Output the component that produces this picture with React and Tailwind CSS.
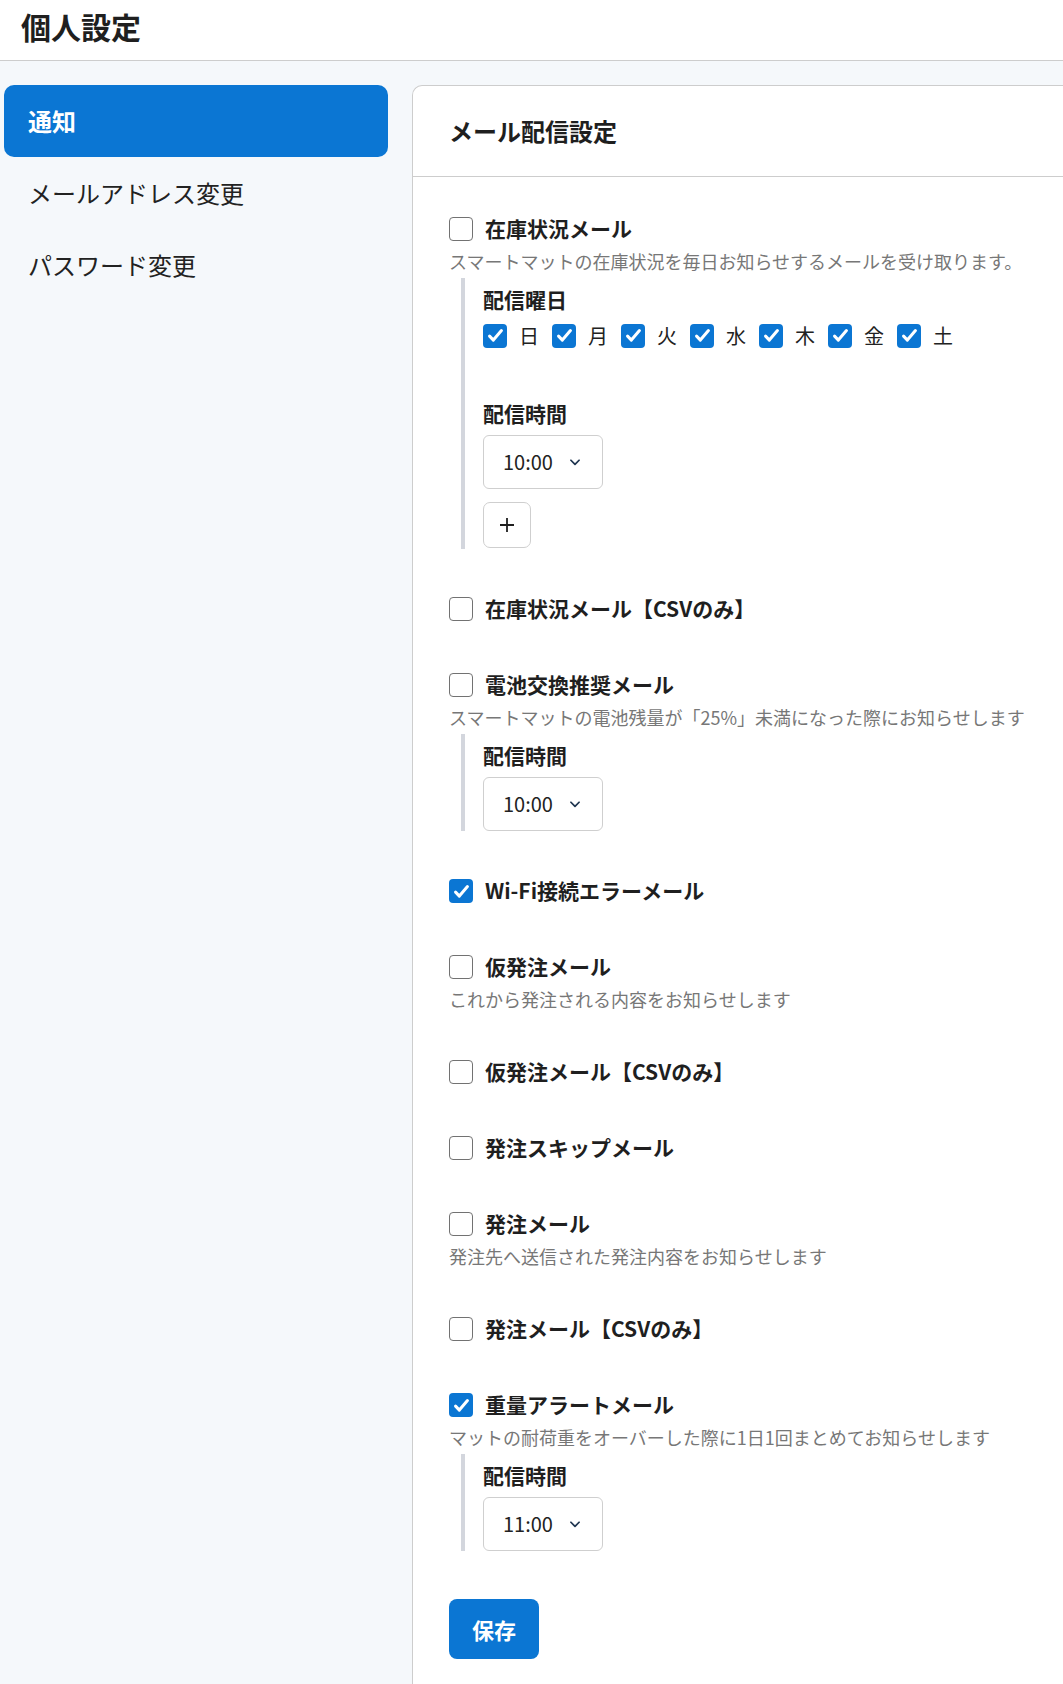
import React from 'react';

const items = [
  {
    label: '在庫状況メール',
    checked: false,
    desc: 'スマートマットの在庫状況を毎日お知らせするメールを受け取ります。',
    sub: 'days',
    time: '10:00',
  },
  { label: '在庫状況メール【CSVのみ】', checked: false },
  {
    label: '電池交換推奨メール',
    checked: false,
    desc: 'スマートマットの電池残量が「25%」未満になった際にお知らせします',
    sub: 'time',
    time: '10:00',
  },
  { label: 'Wi-Fi接続エラーメール', checked: true },
  { label: '仮発注メール', checked: false, desc: 'これから発注される内容をお知らせします' },
  { label: '仮発注メール【CSVのみ】', checked: false },
  { label: '発注スキップメール', checked: false },
  { label: '発注メール', checked: false, desc: '発注先へ送信された発注内容をお知らせします' },
  { label: '発注メール【CSVのみ】', checked: false },
  {
    label: '重量アラートメール',
    checked: true,
    desc: 'マットの耐荷重をオーバーした際に1日1回まとめてお知らせします',
    sub: 'time',
    time: '11:00',
  },
];

const days = ['日', '月', '火', '水', '木', '金', '土'];

function Box({ checked }) {
  if (checked) {
    return (
      <span className="flex w-[24px] h-[24px] shrink-0 items-center justify-center rounded-[4px] bg-[#0b76d3]">
        <svg width="19" height="19" viewBox="0 0 24 24" fill="none">
          <path d="M4.5 12.8l4.8 5L19.5 5.8" stroke="white" strokeWidth="3.8" strokeLinecap="round" strokeLinejoin="round" />
        </svg>
      </span>
    );
  }
  return <span className="block w-[24px] h-[24px] shrink-0 rounded-[4px] border-[1.5px] border-[#727272] bg-white" />;
}

function TimeSelect({ value }) {
  return (
    <div className="mt-[7px] flex h-[54px] w-[120px] items-center rounded-[6px] border border-[#cfcfcf] bg-white pl-[19px]">
      <span className="text-[20px] text-[#222]">{value}</span>
      <svg className="ml-[15px]" width="14" height="14" viewBox="0 0 24 24" fill="none">
        <path d="M5 9l7 7 7-7" stroke="#1f3550" strokeWidth="3" strokeLinecap="round" strokeLinejoin="round" />
      </svg>
    </div>
  );
}

function SubHeading({ children }) {
  return <div className="h-[30px] text-[21px] font-bold leading-[30px] text-[#1f1f1f]">{children}</div>;
}

function Item({ item }) {
  return (
    <div>
      <label className="flex h-[32px] items-center gap-[12px]">
        <Box checked={item.checked} />
        <span className="text-[21px] font-bold text-[#1f1f1f]">{item.label}</span>
      </label>
      {item.desc && (
        <p className="mt-1 text-[18px] leading-[25px] text-[#777]">{item.desc}</p>
      )}
      {item.sub === 'days' && (
        <div className="ml-3 mt-1 border-l-4 border-[#d3d6dd] pb-[1px] pl-[18px] pt-[6px]">
          <SubHeading>配信曜日</SubHeading>
          <div className="mt-[9px] flex h-[25px] items-center">
            {days.map((d) => (
              <div key={d} className="mr-[13px] flex items-center gap-[12px]">
                <Box checked />
                <span className="text-[20px] text-[#222]">{d}</span>
              </div>
            ))}
          </div>
          <div className="mt-[50px]">
            <SubHeading>配信時間</SubHeading>
          </div>
          <TimeSelect value={item.time} />
          <button className="mt-[13px] flex h-[46px] w-[48px] items-center justify-center rounded-[7px] border border-[#cfcfcf] bg-white">
            <svg width="16" height="16" viewBox="0 0 16 16" fill="none">
              <path d="M8 1v14M1 8h14" stroke="#1f1f1f" strokeWidth="1.8" />
            </svg>
          </button>
        </div>
      )}
      {item.sub === 'time' && (
        <div className="ml-3 mt-1 border-l-4 border-[#d3d6dd] pl-[18px] pt-[6px]">
          <SubHeading>配信時間</SubHeading>
          <TimeSelect value={item.time} />
        </div>
      )}
    </div>
  );
}

export default function App() {
  return (
    <div className="flex h-screen flex-col overflow-hidden bg-[#f5f8fb] font-['Noto_Sans_CJK_JP',sans-serif] text-[#1f1f1f]">
      <header className="flex h-[61px] shrink-0 items-center border-b border-[#cdcdcd] bg-white pb-[7px] pl-[21px]">
        <h1 className="text-[30px] font-bold">個人設定</h1>
      </header>

      <div className="flex flex-1">
        <nav className="w-[412px] shrink-0 pl-1 pr-6 pt-6">
          <div className="flex h-[72px] items-center rounded-[10px] bg-[#0b76d3] pl-6 text-[24px] font-bold text-white">
            通知
          </div>
          <div className="flex h-[72px] items-center pl-6 text-[24px] text-[#222]">
            メールアドレス変更
          </div>
          <div className="flex h-[72px] items-center pl-6 text-[24px] text-[#222]">
            パスワード変更
          </div>
        </nav>

        <main className="mt-6 flex-1 rounded-tl-[10px] border-l border-t border-[#cdcdcd] bg-white">
          <div className="flex h-[91px] items-center border-b border-[#cdcdcd] pl-9">
            <h2 className="text-[24px] font-bold">メール配信設定</h2>
          </div>
          <div className="px-9 pt-9">
            <div className="flex flex-col gap-[44px]">
              {items.map((item) => (
                <Item key={item.label} item={item} />
              ))}
            </div>
            <button className="mt-[48px] h-[60px] w-[90px] rounded-[8px] bg-[#0b76d3] text-[22px] font-bold text-white">
              保存
            </button>
          </div>
        </main>
      </div>
    </div>
  );
}
